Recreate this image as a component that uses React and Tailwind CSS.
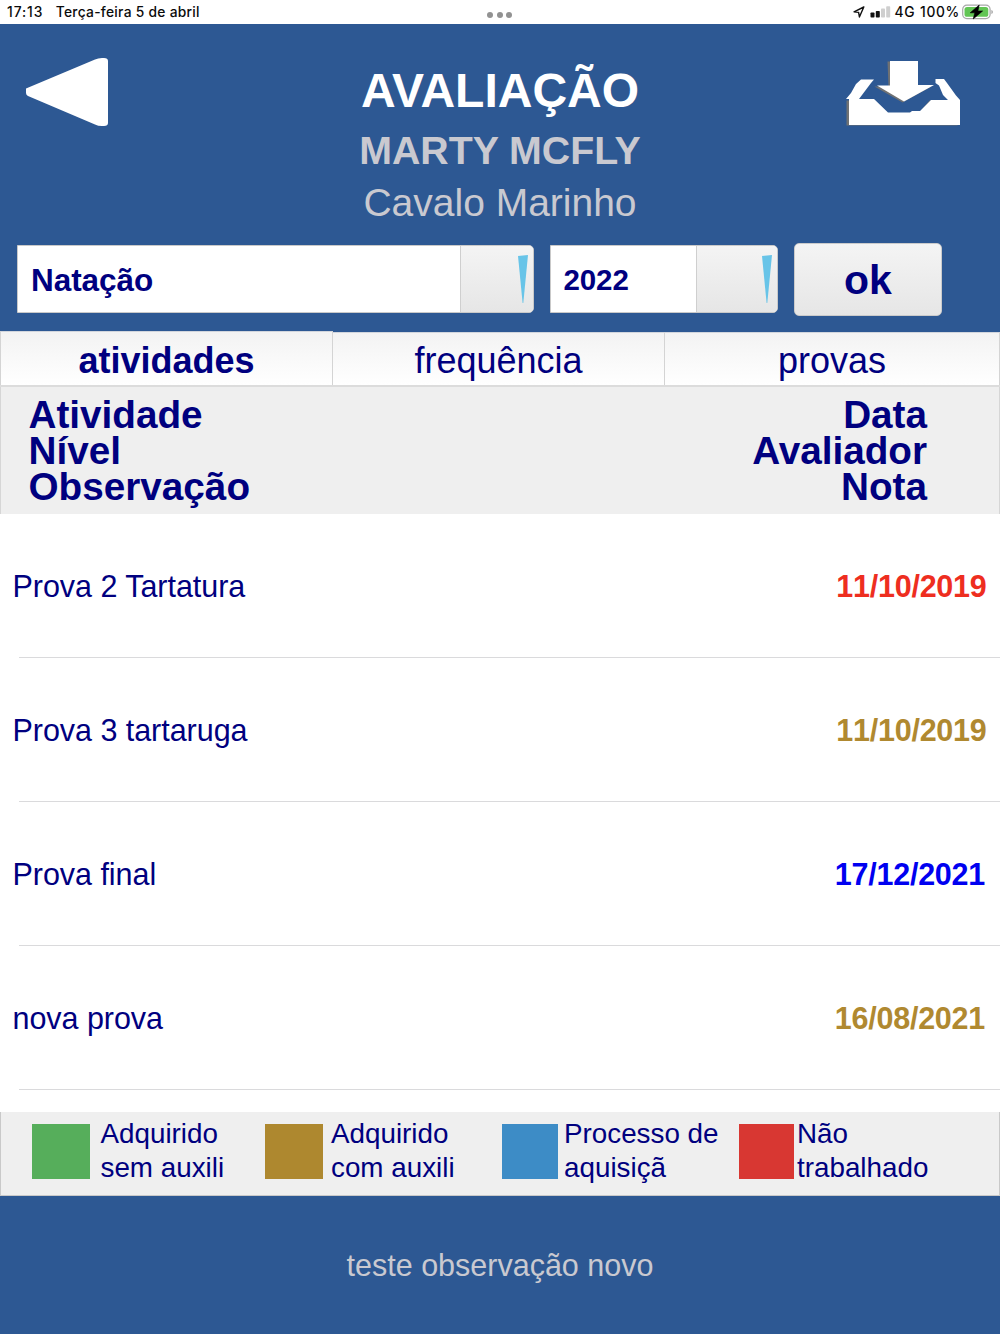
import { useState } from "react";

const tabs = [
  { id: "atividades", label: "atividades", width: "w-[333px]" },
  { id: "frequencia", label: "frequência", width: "w-[332px]" },
  { id: "provas", label: "provas", width: "w-[335px]" },
];

const activities = [
  { id: 1, name: "Prova 2 Tartatura", date: "11/10/2019", color: "mr-[13.5px] text-[#ee2e1f]" },
  { id: 2, name: "Prova 3 tartaruga", date: "11/10/2019", color: "mr-[13.5px] text-[#b08930]" },
  { id: 3, name: "Prova final", date: "17/12/2021", color: "mr-[15px] text-[#0000f0]" },
  { id: 4, name: "nova prova", date: "16/08/2021", color: "mr-[15px] text-[#b08930]" },
];

const legend = [
  {
    lines: ["Adquirido", "sem auxili"],
    box: "w-[58px] bg-[#56ae5b]",
    item: "w-[233px] gap-[10.5px]",
  },
  {
    lines: ["Adquirido", "com auxili"],
    box: "w-[58px] bg-[#ae882f]",
    item: "w-[237px] gap-[8px]",
  },
  {
    lines: ["Processo de", "aquisiçã"],
    box: "w-[56px] bg-[#3d8cc6]",
    item: "w-[237px] gap-[6px]",
  },
  {
    lines: ["Não", "trabalhado"],
    box: "w-[55px] bg-[#d83732]",
    item: "gap-[3px]",
  },
];

function StatusBar() {
  return (
    <div className="relative flex h-6 items-center justify-between bg-white pl-[7px] pr-[7px] font-['Inter',sans-serif] text-[13.8px] font-medium leading-6 text-[#0b0b0b]">
      <div className="flex gap-[12.5px] whitespace-nowrap">
        <span className="tracking-[0.9px]">17:13</span>
        <span className="tracking-[0.28px]">Terça-feira 5 de abril</span>
      </div>

      <div className="absolute left-[487px] top-[12px] flex gap-[3.5px]">
        <span className="h-[6px] w-[6px] rounded-full bg-[#929292]" />
        <span className="h-[6px] w-[6px] rounded-full bg-[#929292]" />
        <span className="h-[6px] w-[6px] rounded-full bg-[#929292]" />
      </div>

      <div className="flex items-center whitespace-nowrap">
        <svg width="12" height="12" viewBox="0 0 12 12" className="mr-[5px]">
          <path
            d="M10.8 1 L1 5.8 L5.6 6.4 L6.4 11 Z"
            fill="none"
            stroke="#111"
            strokeWidth="1.4"
            strokeLinejoin="round"
          />
        </svg>
        <svg width="21" height="12" viewBox="0 0 21 12" className="mr-[4px]">
          <rect x="0.5" y="6.5" width="4" height="5" rx="0.8" fill="#111" />
          <rect x="5.8" y="5" width="4" height="6.5" rx="0.8" fill="#111" />
          <rect x="11" y="2.5" width="4" height="9" rx="0.8" fill="#cfcfcf" />
          <rect x="16.2" y="0.3" width="4" height="11.2" rx="0.8" fill="#cfcfcf" />
        </svg>
        <span className="mr-[5px] tracking-[0.5px]">4G</span>
        <span className="mr-[2px] tracking-[0.7px]">100%</span>
        <svg width="31" height="16" viewBox="0 0 31 16">
          <rect x="0.7" y="1.2" width="27.4" height="13.4" rx="4.2" fill="none" stroke="#a8a8a8" strokeWidth="1.2" />
          <rect x="2.5" y="3" width="23.8" height="9.8" rx="2.6" fill="#62c554" />
          <path d="M29.5 6 v4 c1.6 -0.6 1.6 -3.4 0 -4 Z" fill="#8f8f8f" />
          <path d="M17.2 1 L8.2 8.8 H12.8 L11.2 15 L20.6 7 H15.9 Z" fill="#000" stroke="#000" strokeWidth="0.6" />
        </svg>
      </div>
    </div>
  );
}

function Select({ value, className, textClass, buttonClass }) {
  return (
    <div
      className={`mt-[2px] flex h-[68px] overflow-hidden rounded-r-[5px] border border-[#c9c9c9] bg-white ${className}`}
    >
      <div className={`flex flex-1 items-center pl-[13px] font-bold ${textClass}`}>
        {value}
      </div>
      <div
        className={`flex justify-end border-l border-[#cfcfcf] bg-linear-to-b from-[#f4f4f4] to-[#e6e6e6] ${buttonClass}`}
      >
        <svg width="10" height="49" viewBox="0 0 10 49" className="mt-[9px]">
          <path d="M0 1 L10 0 L5.3 48 L4.6 48 Z" fill="#68c4e8" />
        </svg>
      </div>
    </div>
  );
}

export default function App() {
  const [activeTab, setActiveTab] = useState("atividades");

  return (
    <div className="flex h-[1334px] w-[1000px] flex-col overflow-hidden bg-white font-['Liberation_Sans',Arial,sans-serif] text-[#00007f]">
      <StatusBar />

      {/* Header */}
      <header className="h-[307px] bg-[#2d5893]">
        <div className="flex h-[219px] justify-between">
          <button className="ml-[25px] mt-[34px] h-[69px] w-[84px]">
            <svg width="84" height="69" viewBox="0 0 84 69">
              <path
                d="M1 30.5 L70 1.5 Q73 0 77 0 H79 Q83 0 83 3 V65 Q83 68 79 68 H77 Q73 68 70 66.5 L3 38 Q1 37 1 35 Z"
                fill="#fff"
              />
            </svg>
          </button>

          <div className="flex flex-col items-center whitespace-nowrap pl-[46px] pt-[36px]">
            <h1 className="text-[48px] font-bold leading-[61px] text-white">
              AVALIAÇÃO
            </h1>
            <h2 className="text-[39.3px] font-bold leading-[59px] text-[#c9c9d0]">
              MARTY MCFLY
            </h2>
            <p className="text-[39px] leading-[45px] text-[#c9c9d0]">
              Cavalo Marinho
            </p>
          </div>

          <button className="mr-[39px] mt-[36px] h-[67px] w-[116px]">
            <svg width="116" height="67" viewBox="0 0 116 67">
              <g fill="#6f7173" transform="translate(-1.5 0.5)">
                <path d="M44 1 H73 V26 H88 L59 42 L31 26 H45 Z" />
                <path d="M3 40 H29 L43 53 H75 L86 40 H114 V65 H3 Z" />
              </g>
              <g fill="#fff">
                <path d="M45 1 H73 V25 H89 L59 41.5 L32 25.5 H45 Z" />
                <path d="M16 19.5 H29 L26 23 L14 39 H29 L43 52.5 H65 L67 51 H75 L86 40 H103 L98 35 L94 25.5 L90.5 23 V19 H99 L102 23 L111 35.5 L115 40 V65 H4 V39 H1 L6 33 L11 24 Z" />
              </g>
            </svg>
          </button>
        </div>

        <div className="flex items-start pl-[17px]">
          <Select
            value="Natação"
            className="w-[517px]"
            textClass="pt-[4px] text-[31.5px] tracking-[-0.05px]"
            buttonClass="w-[73px] pr-[5px]"
          />
          <Select
            value="2022"
            className="ml-[15.5px] w-[228px]"
            textClass="pt-[2px] text-[29.5px] tracking-[-0.1px]"
            buttonClass="w-[81px] pr-[5px]"
          />
          <button className="ml-[16.5px] h-[73px] w-[148px] rounded-[5px] border border-[#cbcbcb] bg-linear-to-b from-[#f4f4f4] to-[#e6e6e6] pt-[2px] text-[41px] font-bold leading-[69px]">
            ok
          </button>
        </div>
      </header>

      {/* Tabs */}
      <nav className="flex h-[56px] items-end border-b-2 border-[#dcdcdc] bg-[#2d5893]">
        {tabs.map((tab) => (
          <button
            key={tab.id}
            onClick={() => setActiveTab(tab.id)}
            className={`border-r border-t border-r-[#d4d4d4] border-t-[#d2d6dd] bg-linear-to-b from-[#f3f3f3] to-white text-[36px] first:border-l first:border-l-[#d4d4d4] ${tab.width} ${
              activeTab === tab.id
                ? "h-[54px] pt-[4px] font-bold leading-[49px]"
                : "h-[53px] pt-[4px] leading-[48px]"
            }`}
          >
            {tab.label}
          </button>
        ))}
      </nav>

      {/* Column titles */}
      <div className="flex h-[127px] justify-between border-x border-[#d6d6d6] bg-[#efefef] pl-[27.5px] pr-[72px] pt-[10px] text-[38.7px] font-bold leading-[36px]">
        <div>
          <p>Atividade</p>
          <p>Nível</p>
          <p>Observação</p>
        </div>
        <div className="text-right">
          <p>Data</p>
          <p>Avaliador</p>
          <p>Nota</p>
        </div>
      </div>

      {/* Activities */}
      <ul className="h-[598px]">
        {activities.map((item) => (
          <li key={item.id} className="h-[144px] text-[30.5px]">
            <div className="flex h-[143px] items-center justify-between pl-[12.5px] pt-[3px]">
              <span className="tracking-[-0.04px]">{item.name}</span>
              <span className={`font-bold tracking-[-0.25px] [font-kerning:none] ${item.color}`}>
                {item.date}
              </span>
            </div>
            <div className="ml-[19px] h-px bg-[#dadadc]" />
          </li>
        ))}
      </ul>

      {/* Legend */}
      <div className="flex h-[84px] border-x border-b border-[#c9c9c9] bg-[#efefef] pl-[31px] text-[27.8px] leading-[33.6px]">
        {legend.map((entry) => (
          <div key={entry.lines.join(" ")} className={`flex whitespace-nowrap ${entry.item}`}>
            <div className={`mt-[12px] h-[55px] ${entry.box}`} />
            <div className="mt-[5px]">
              <p>{entry.lines[0]}</p>
              <p>{entry.lines[1]}</p>
            </div>
          </div>
        ))}
      </div>

      <footer className="flex flex-1 items-center justify-center bg-[#2d5893] pt-[2px] text-[30.5px] text-[#c9c9d0]">
        teste observação novo
      </footer>
    </div>
  );
}
